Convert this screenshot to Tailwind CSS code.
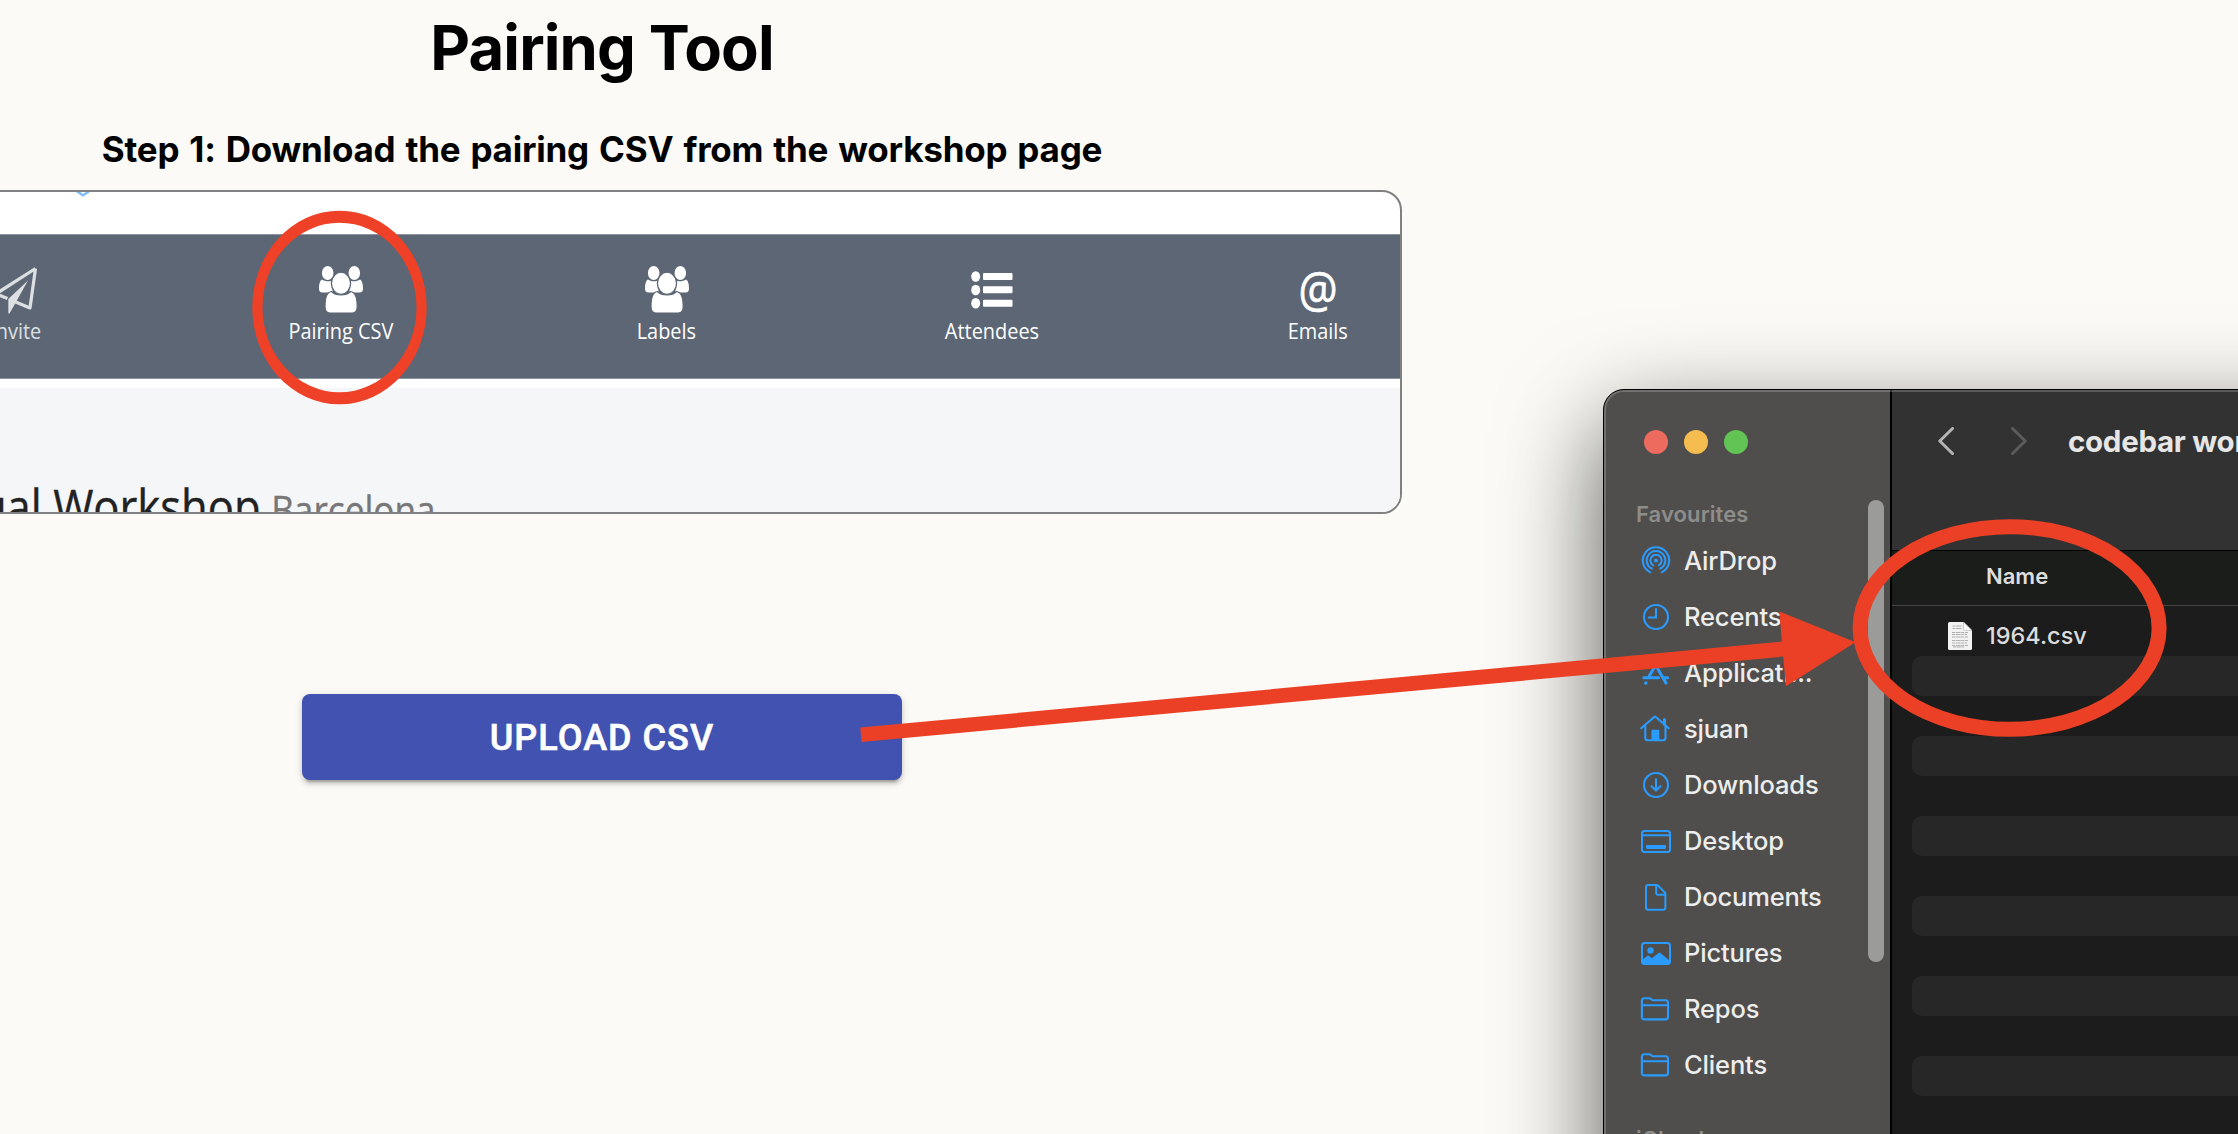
<!DOCTYPE html>
<html lang="en">
<head>
<meta charset="utf-8">
<title>Pairing Tool</title>
<script src="https://cdn.jsdelivr.net/npm/@tailwindcss/browser@4"></script>
</head>
<body class="relative w-[2238px] h-[1134px] overflow-hidden bg-[#fbfaf6] font-[Inter,sans-serif]">

<svg class="hidden">
  <symbol id="group" viewBox="0 0 44 47">
    <g fill="#fff">
      <ellipse cx="8.7" cy="7" rx="5.8" ry="7"/>
      <ellipse cx="35.3" cy="7" rx="5.8" ry="7"/>
      <path d="M3 13.5c2.500 2 8 2.500 10.500.800V26.500H3.500C1 26.500 0 25 0 22.500 0 18.500.8 14.500 3 13.500zM41 13.500c-2.500 2-8 2.500-10.500.800V26.500H40.500C43 26.500 44 25 44 22.500 44 18.500 43.200 14.500 41 13.500z"/>
      <path d="M12.500 25.500c4 4.500 15 4.500 19 0 4.500.500 6.700 7 6.700 15 0 4.500-2 6.500-5 6.500H11c-3 0-5-2-5-6.500 0-8 2-14.500 6.500-15z" stroke="#5c6674" stroke-width="1.200"/>
      <ellipse cx="22" cy="17.300" rx="9.600" ry="11.100" stroke="#5c6674" stroke-width="1.300"/>
    </g>
  </symbol>
  <symbol id="folder" viewBox="0 0 30 30">
    <path d="M1.900 23V6.800Q1.900 4.300 4.400 4.300H9.200Q10.300 4.300 11 5L11.900 5.800Q12.500 6.300 13.500 6.300H25.500Q28 6.300 28 8.800V23Q28 25.400 25.500 25.400H4.400Q1.900 25.400 1.900 23zM1.900 11.300H28" fill="none" stroke="#2a9bff" stroke-width="2.100"/>
  </symbol>
</svg>

<main class="flex w-[1204px] flex-col items-center text-black">
  <h1 class="mt-[11px] whitespace-nowrap text-[61.500px] leading-[74px] font-bold tracking-[-0.85px]">Pairing Tool</h1>
  <h2 class="mt-[43px] whitespace-nowrap text-[35px] leading-[42px] font-bold tracking-[-0.220px] [word-spacing:2px]">Step 1: Download the pairing CSV from the workshop page</h2>

  <!-- Workshop page preview -->
  <section class="relative mt-[20px] flex h-[324px] w-[1600px] shrink-0 flex-col overflow-hidden rounded-[20px] border-2 border-[#808080] bg-white font-['Open_Sans',sans-serif]">
    <svg class="absolute left-[270px] top-0" width="18" height="6" viewBox="0 0 18 6"><path d="M1-2L9 3.400L17-2" fill="none" stroke="#7dbcf8" stroke-width="2.400"/></svg>
    <nav class="mt-[42px] flex h-[145px] shrink-0 border-y border-[#8b94a0] bg-[#5c6674] pl-[49px] text-[22.400px] leading-[30px] text-white">
      <div class="flex w-[325.5px] shrink-0 flex-col items-center pt-[31px] text-[#dde0e3]">
        <svg width="44" height="48" viewBox="0 0 44 48"><path d="M41.500 2.500L36 42 20.500 35.500M13.500 32.500L2 27.800 41.500 2.500" fill="none" stroke="#dde0e3" stroke-width="3.200" stroke-linejoin="round"/><path d="M34 14.500L21.500 37 15.500 47.500H14.300V33z" fill="#dde0e3"/></svg>
        <span class="mt-[2px] scale-x-[.89]">Invite</span>
      </div>
      <div class="flex w-[325.5px] shrink-0 flex-col items-center pt-[31px]">
        <svg width="44" height="48"><use href="#group" width="44" height="47"/></svg>
        <span class="mt-[2px] scale-x-[.89]">Pairing CSV</span>
      </div>
      <div class="flex w-[325.5px] shrink-0 flex-col items-center pt-[31px]">
        <svg width="44" height="48"><use href="#group" width="44" height="47"/></svg>
        <span class="mt-[2px] scale-x-[.89]">Labels</span>
      </div>
      <div class="flex w-[325.5px] shrink-0 flex-col items-center pt-[31px]">
        <svg width="42" height="48" viewBox="0 0 42 48" fill="#fff">
          <ellipse cx="4.700" cy="10.500" rx="4.500" ry="5.200"/><ellipse cx="4.700" cy="24" rx="4.500" ry="5.200"/><ellipse cx="4.700" cy="37.300" rx="4.500" ry="5.200"/>
          <rect x="12" y="7" width="29.500" height="7" rx="1"/><rect x="12" y="20.300" width="29.500" height="7" rx="1"/><rect x="12" y="33.700" width="29.500" height="7" rx="1"/>
        </svg>
        <span class="mt-[2px] scale-x-[.89]">Attendees</span>
      </div>
      <div class="flex w-[325.5px] shrink-0 flex-col items-center pt-[31px]">
        <span class="h-[48px] scale-x-[.89] text-[49px] leading-[44px] [-webkit-text-stroke:0.700px_#fff]">@</span>
        <span class="mt-[2px] scale-x-[.89]">Emails</span>
      </div>
    </nav>
    <div class="mt-[9px] flex h-[130px] shrink-0 bg-[#f5f6f8] pt-[85px]">
      <p class="flex origin-left scale-x-[.88] items-baseline whitespace-nowrap pl-[120px] text-[49.500px] leading-[67px] text-[#222] [-webkit-text-stroke:0.400px_#222]">Virtual Workshop<small class="ml-[12px] text-[40px] text-[#777] [-webkit-text-stroke:0.400px_#777]">Barcelona</small></p>
    </div>
  </section>

  <button class="mt-[180px] h-[86px] w-[600px] shrink-0 rounded-[8px] bg-[#4152b0] pt-[2px] font-[Roboto,sans-serif] text-[36px] font-medium tracking-[1.030px] text-white [-webkit-text-stroke:0.600px_#fff] shadow-[0_6px_2px_-4px_rgba(0,0,0,.2),0_4px_4px_rgba(0,0,0,.14),0_2px_10px_rgba(0,0,0,.12)]">UPLOAD CSV</button>
</main>

<!-- Finder window -->
<div class="absolute left-[1603px] top-[389px] flex h-[1180px] w-[1400px] overflow-hidden rounded-[21px] border border-black bg-[#1c1c1c] shadow-[0_36px_100px_rgba(0,0,0,.66)]">
  <aside class="relative flex w-[288px] shrink-0 flex-col border-r-2 border-black bg-[#4f4e4c] pl-[32px]">
    <div class="ml-[8px] mt-[40px] flex gap-[16px]">
      <i class="size-[24px] rounded-full bg-[#ed6a5e]"></i>
      <i class="size-[24px] rounded-full bg-[#f5bd4f]"></i>
      <i class="size-[24px] rounded-full bg-[#61c454]"></i>
    </div>
    <h3 class="mt-[46px] text-[22px] leading-[28px] font-semibold tracking-[0.1px] text-[#8e8d8b]">Favourites</h3>
    <ul class="mt-[5px] text-[25.500px] font-medium tracking-[-0.150px] text-[#ededec]">
      <li class="ml-[5px] flex h-[56px] items-center gap-[13px]">
        <svg width="30" height="30" viewBox="0 0 30 30" fill="none" stroke="#2a9bff" stroke-width="2" stroke-linecap="round"><circle cx="15" cy="14.400" r="2" fill="#2a9bff" stroke="none"/><path d="M9.200 26.300A13.200 13.200 0 1 1 20.800 26.300M10.800 22.700A9.300 9.300 0 1 1 19.200 22.700M12.300 19.300A5.600 5.600 0 1 1 17.700 19.300"/></svg>AirDrop</li>
      <li class="ml-[5px] flex h-[56px] items-center gap-[13px]">
        <svg width="30" height="30" viewBox="0 0 30 30" fill="none" stroke="#2a9bff" stroke-width="2.100" stroke-linecap="round"><circle cx="15" cy="15" r="12"/><path d="M15 7V15.500H7.700"/></svg>Recents</li>
      <li class="ml-[5px] flex h-[56px] items-center gap-[13px]">
        <svg width="30" height="30" viewBox="0 0 30 30" fill="none" stroke="#2a9bff" stroke-width="3.100" stroke-linecap="round"><path d="M2.800 19.700H17.500M22.500 19.700H26.700M16.800 3.500L8 18.500M5 24.800L4.600 25.300M12.500 3.500L25 25"/></svg>Applicati...</li>
      <li class="ml-[5px] flex h-[56px] items-center gap-[13px]">
        <svg class="-ml-px mr-px" width="30" height="30" viewBox="0 0 30 30" fill="none" stroke="#2a9bff" stroke-width="2.100" stroke-linecap="round" stroke-linejoin="round"><path d="M1.200 14.300L14.200 3Q15 2.300 15.800 3L28.800 14.300M5.300 12V24Q5.300 26.200 7.500 26.200H23.300Q25.500 26.200 25.500 24V12"/><path d="M24.500 5.500V10.500" stroke-width="3"/><path d="M11.500 26V16.700Q11.500 15.800 12.400 15.800H18.400Q19.300 15.800 19.300 16.700V26z" fill="#2a9bff" stroke="none"/></svg>sjuan</li>
      <li class="ml-[5px] flex h-[56px] items-center gap-[13px]">
        <svg width="30" height="30" viewBox="0 0 30 30" fill="none" stroke="#2a9bff" stroke-width="2.100" stroke-linecap="round" stroke-linejoin="round"><circle cx="15" cy="15" r="12"/><path d="M15 9.300V20.300M10.500 16.200L15 20.500L19.500 16.200"/></svg>Downloads</li>
      <li class="ml-[5px] flex h-[56px] items-center gap-[13px]">
        <svg width="30" height="30" viewBox="0 0 30 30" fill="none" stroke="#2a9bff" stroke-width="2"><rect x="1" y="4.900" width="28" height="21.200" rx="2.600"/><path d="M1 9.300H29"/><rect x="5" y="19" width="20" height="4" rx="1.200" fill="#2a9bff" stroke="none"/></svg>Desktop</li>
      <li class="ml-[5px] flex h-[56px] items-center gap-[13px]">
        <svg width="30" height="30" viewBox="0 0 30 30" fill="none" stroke="#2a9bff" stroke-width="2" stroke-linejoin="round"><path d="M5 25.500V5.100Q5 2.900 7.200 2.900H15.500Q16.500 2.900 17.200 3.600L23.800 10.500Q24.400 11.100 24.400 12.200V25.500Q24.400 27.800 22.200 27.800H7.200Q5 27.800 5 25.500zM15.200 3V11Q15.200 12.700 17 12.700H24.300"/></svg>Documents</li>
      <li class="ml-[5px] flex h-[56px] items-center gap-[13px]">
        <svg width="30" height="30" viewBox="0 0 30 30"><rect x="1" y="4.900" width="28" height="21.200" rx="2.600" fill="none" stroke="#2a9bff" stroke-width="2"/><circle cx="9.500" cy="12.500" r="3.200" fill="#2a9bff"/><path d="M1 22L6.500 17.800Q7.200 17.400 7.900 17.900L11 20.200 17.500 15Q18.500 14.200 19.500 15L29 23V25L27 26.500H3L1 25z" fill="#2a9bff"/></svg>Pictures</li>
      <li class="ml-[5px] flex h-[56px] items-center gap-[13px]">
        <svg class="-ml-px mr-px" width="30" height="30"><use href="#folder"/></svg>Repos</li>
      <li class="ml-[5px] flex h-[56px] items-center gap-[13px]">
        <svg class="-ml-px mr-px" width="30" height="30"><use href="#folder"/></svg>Clients</li>
    </ul>
    <h3 class="mt-[32px] text-[22px] leading-[28px] font-semibold text-[#8e8d8b]">iCloud</h3>
    <div class="absolute right-[6px] top-[110px] h-[462px] w-[16px] rounded-full bg-[#9b9b99]"></div>
  </aside>

  <div class="flex grow flex-col">
    <header class="flex h-[160px] shrink-0 items-start bg-[#323232] pl-[46px] pt-[33px]">
      <svg class="mt-[4px]" width="16" height="28" viewBox="0 0 16 28"><path d="M14.500 1.500L1.800 14L14.500 26.500" fill="none" stroke="#b5b5b5" stroke-width="3" stroke-linecap="round" stroke-linejoin="round"/></svg>
      <svg class="ml-[57px] mt-[4px]" width="16" height="28" viewBox="0 0 16 28"><path d="M1.500 1.500L14.200 14L1.500 26.500" fill="none" stroke="#5c5c5c" stroke-width="3" stroke-linecap="round" stroke-linejoin="round"/></svg>
      <h2 class="ml-[41px] whitespace-nowrap text-[29.500px] leading-[37px] font-bold tracking-[-0.300px] text-[#e6e6e6]">codebar workshop</h2>
    </header>
    <div class="flex h-[56px] shrink-0 items-center border-b border-t border-b-[#444544] border-t-black bg-[#1b1d1a] pb-[4px] pl-[94px] text-[22px] font-semibold text-[#dededd]">Name</div>
    <div class="mt-[10px] flex h-[40px] shrink-0 items-center pl-[56px] text-[23.500px] font-medium text-[#dcdcdc]">
      <svg width="24" height="28" viewBox="0 0 24 28"><path d="M1.500 0H15.500L24 8.500V26.500Q24 28 22.500 28H1.500Q0 28 0 26.500V1.500Q0 0 1.500 0z" fill="#f3f3f3"/><path d="M15.500 0V7Q15.500 8.500 17 8.500H24z" fill="#fff" stroke="#b9b9b9" stroke-width=".700"/><path d="M4.500 4H14M4.500 6.500H14M4 10.500H20M4 12.500H19M4 15H20M4 18.500H20M4 21H19M4 23.500H20M5 25H16" stroke="#b0b0b0" stroke-width="1.100" stroke-dasharray="3 .6 5 .5"/></svg>
      <span class="ml-[14px]">1964.csv</span>
    </div>
    <div class="flex flex-col gap-[40px] pl-[20px]">
      <div class="h-[40px] rounded-[10px] bg-[#272727]"></div>
      <div class="h-[40px] rounded-[10px] bg-[#272727]"></div>
      <div class="h-[40px] rounded-[10px] bg-[#272727]"></div>
      <div class="h-[40px] rounded-[10px] bg-[#272727]"></div>
      <div class="h-[40px] rounded-[10px] bg-[#272727]"></div>
      <div class="h-[40px] rounded-[10px] bg-[#272727]"></div>
    </div>
  </div>
  <div class="absolute inset-0 rounded-[20px] border-2 border-white/20"></div>
</div>

<!-- Red annotations over the page -->
<svg class="absolute left-0 top-0" width="2238" height="1134" viewBox="0 0 2238 1134">
  <path fill-rule="evenodd" fill="#ee4127" d="M252.300 307.500a87.200 96.700 0 1 0 174.400 0a87.200 96.700 0 1 0-174.400 0zM262.500 307.500a77 84.800 0 1 1 154 0a77 84.800 0 1 1-154 0z"/>
  <ellipse cx="2009.600" cy="628" rx="149.500" ry="101.300" fill="none" stroke="#eb4025" stroke-width="15"/>
  <path fill="#eb4025" d="M860.300 727.600L1781.800 641.600 1779.500 611.500 1855.500 642.300 1786 686.200 1783.200 656.600 861.400 741.900z"/>
</svg>
</body>
</html>
